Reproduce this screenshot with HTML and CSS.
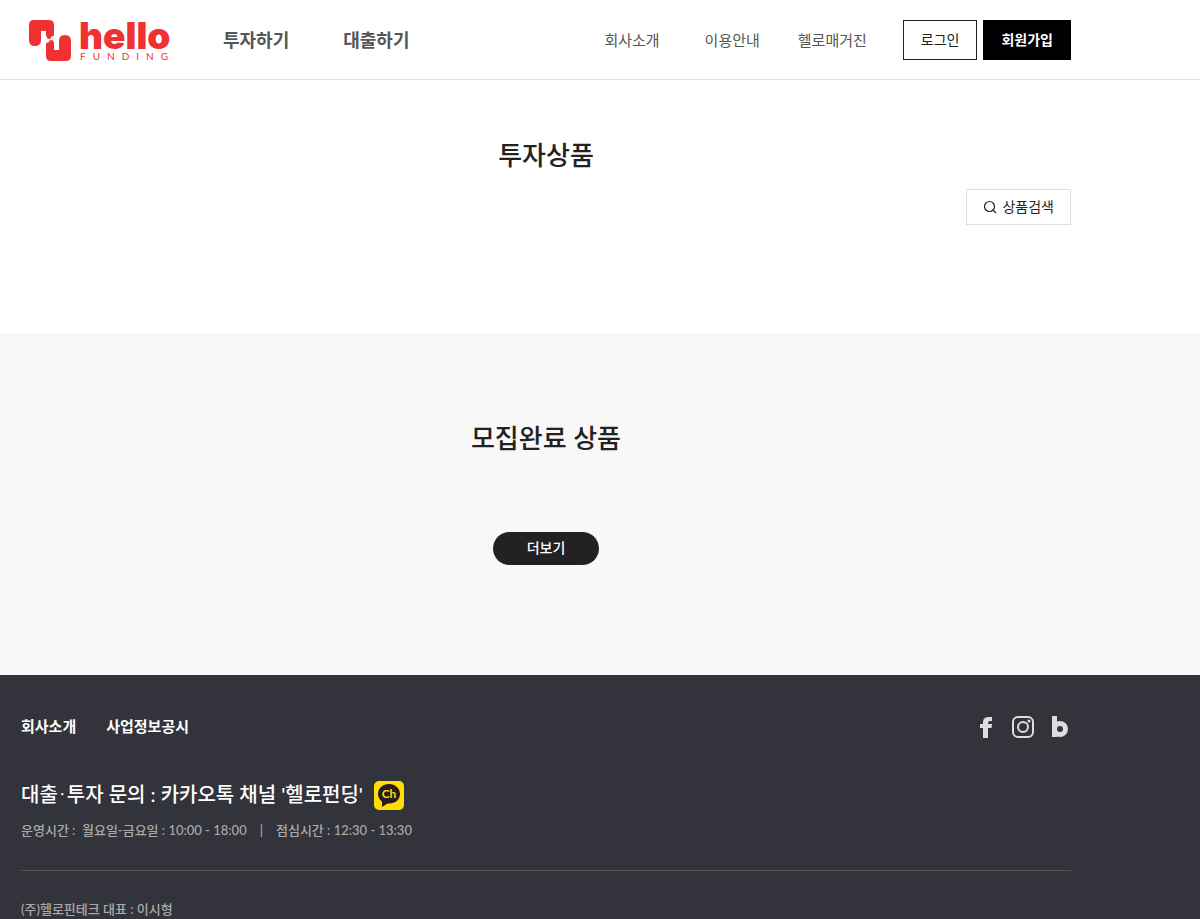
FILE: index.html
```html
<!DOCTYPE html>
<html lang="ko">
<head>
<meta charset="utf-8">
<meta name="viewport" content="width=device-width, initial-scale=1">
<title>헬로펀딩 - 투자상품</title>
<link rel="stylesheet" href="styles.css">
</head>
<body>
<header class="site-header">
  <div class="container header-inner">
    <a class="logo" href="#" aria-label="hello FUNDING">
      <svg width="150" height="42" viewBox="0 0 150 42" aria-hidden="true">
        <path class="logo-shape" d="M5 0H20Q25 0 25 5V15Q25 16 23.500 16Q22.500 16 22 17.500Q21.500 19 20 19Q18 19 18 17.500Q18 16 17 16V11H12V20Q12 26 6 26Q0 26 0 20V5Q0 0 5 0Z"/>
        <path class="logo-shape" d="M17 36V24Q17 22.500 18.500 22.500Q20 22.500 20.500 21Q21 20 22.500 20Q24.500 20 24.500 21.500Q24.500 22.500 25 22.500V30H30V21Q30 15 36 15Q42 15 42 21V36Q42 41 37 41H22Q17 41 17 36Z"/>
        <text class="logo-name" x="50" y="29">hello</text>
        <text class="logo-sub" x="51" y="40">FUNDING</text>
      </svg>
    </a>
    <nav class="main-nav">
      <a href="#">투자하기</a>
      <a href="#">대출하기</a>
    </nav>
    <nav class="sub-nav">
      <a href="#">회사소개</a>
      <a href="#">이용안내</a>
      <a href="#">헬로매거진</a>
    </nav>
    <div class="account">
      <button class="btn btn-login" type="button">로그인</button>
      <button class="btn btn-join" type="button">회원가입</button>
    </div>
  </div>
</header>
<main>
  <section class="products">
    <div class="container">
      <h2 class="section-title">투자상품</h2>
      <div class="tools">
        <button class="btn-search" type="button">
          <svg width="14" height="14" viewBox="0 0 14 14" aria-hidden="true"><circle cx="6.500" cy="6.500" r="5"/><path d="M10 10L13 13"/></svg>
          <span>상품검색</span>
        </button>
      </div>
    </div>
  </section>
  <section class="completed">
    <div class="container">
      <h2 class="section-title">모집완료 상품</h2>
      <button class="btn-more" type="button">더보기</button>
    </div>
  </section>
</main>
<footer class="site-footer">
  <div class="container">
    <div class="footer-top">
      <nav class="footer-nav">
        <a href="#">회사소개</a>
        <a href="#">사업정보공시</a>
      </nav>
      <div class="social">
        <a href="#" aria-label="Facebook"><svg width="22" height="22" viewBox="0 0 22 22"><path class="fill" d="M8 22V12H5V8H8V6Q8 1 14 1H17V5H15Q13 5 13 7V8H17L16.500 12H13V22Z"/></svg></a>
        <a href="#" aria-label="Instagram"><svg width="22" height="22" viewBox="0 0 22 22"><rect class="line" x="1" y="1" width="20" height="20" rx="5"/><circle class="line" cx="11" cy="11" r="5"/><circle class="fill" cx="17" cy="5" r="1.500"/></svg></a>
        <a href="#" aria-label="Blog"><svg width="22" height="22" viewBox="0 0 22 22"><rect class="fill" x="3" y="0" width="5" height="21"/><circle class="ring" cx="11" cy="13" r="5.500"/></svg></a>
      </div>
    </div>
    <div class="contact">
      <p class="contact-title">대출<span class="dot">·</span>투자 문의 : 카카오톡 채널 '헬로펀딩'</p>
      <a href="#" class="kakao" aria-label="카카오톡 채널">
        <svg width="30" height="29" viewBox="0 0 30 29"><rect class="kakao-bg" width="30" height="29" rx="5"/><path class="kakao-bubble" d="M15 3C8.500 3 4 7.500 4 13Q4 17.500 8 20.500V26L13.500 22.500H15C21.500 22.500 26 18.500 26 13S21.500 3 15 3Z"/><text class="kakao-text" x="15" y="17" text-anchor="middle">Ch</text></svg>
      </a>
    </div>
    <p class="hours"><span>운영시간&nbsp;: &nbsp;월요일-금요일 : 10:00 - 18:00</span><span class="bar">|</span><span>점심시간 : 12:30 - 13:30</span></p>
    <p class="company">(주)헬로핀테크 대표 : 이시형</p>
  </div>
</footer>
</body>
</html>
```
FILE: styles.css
```css
* { box-sizing: border-box; }
body {
  margin: 0;
  background: #fff;
  color: #222;
  font-family: Lato, "Noto Sans CJK KR", sans-serif;
  font-size: 15px;
  line-height: 20px;
}
a { color: inherit; text-decoration: none; }
button { font-family: inherit; cursor: pointer; }
h2, p { margin: 0; }
svg { display: block; overflow: visible; }
.container { width: 91%; padding: 0 21px; }

.site-header { border-bottom: 1px solid #ddd; }
.header-inner { display: flex; align-items: center; height: 79px; }
.logo { margin: 2px 0 0 8px; }
.logo-shape { fill: #ef3131; }
.logo-name { fill: #ef3131; font-family: Inter, sans-serif; font-weight: 900; font-size: 37px; }
.logo-sub { fill: #ef3131; font-size: 10px; letter-spacing: 7px; }
.main-nav { display: flex; gap: 54px; margin-left: 44px; font-size: 18px; font-weight: 700; color: #555; }
.sub-nav { display: flex; gap: 45px; margin-left: auto; color: #555; }
.sub-nav a:last-child { margin-left: -7px; }
.account { display: flex; gap: 6px; margin-left: 36px; }
.btn { height: 40px; padding: 0 17px; border: 1px solid #222; font-size: 14px; line-height: 20px; }
.btn-login { background: #fff; color: #222; }
.btn-join { background: #000; border-color: #000; color: #fff; font-weight: 700; }

.section-title { font-size: 26px; line-height: 38px; font-weight: 500; text-align: center; }
.products { padding: 56px 0 108px; }
.tools { display: flex; justify-content: flex-end; margin-top: 15px; }
.btn-search {
  display: flex; align-items: center; gap: 5px;
  height: 36px; padding: 0 16px;
  border: 1px solid #ddd; background: #fff; color: #222;
  font-size: 14px;
}
.btn-search span { padding-bottom: 2px; }
.btn-search svg { fill: none; stroke: #222; stroke-width: 1.2; }
.completed { padding: 86px 0 110px; background: #f8f8f8; }
.btn-more {
  display: block; height: 33px; margin: 75px auto 0; padding: 0 34px 3px;
  border: 0; border-radius: 17px; background: #222; color: #fff;
  font-size: 14px; font-weight: 500;
}

.site-footer { padding-top: 41px; background: #33333b; color: #fff; }
.footer-top { display: flex; justify-content: space-between; align-items: flex-start; }
.footer-nav { display: flex; gap: 30px; font-weight: 700; }
.social { display: flex; gap: 15px; }
.social .fill { fill: #ddd; }
.social .line { fill: none; stroke: #ddd; stroke-width: 2; }
.social .ring { fill: none; stroke: #ddd; stroke-width: 5; }
.contact { display: flex; align-items: center; gap: 11px; margin-top: 42px; }
.contact-title { padding-bottom: 2px; font-size: 20px; line-height: 28px; font-weight: 500; }
.contact-title .dot { font-family: "Noto Sans CJK KR", sans-serif; font-weight: 300; margin: 0 2px; }
.kakao-bg { fill: #ffde00; }
.kakao-bubble { fill: #2a1a1b; }
.kakao-text { fill: #ffde00; font-size: 12px; font-weight: 700; }
.hours { padding-bottom: 30px; margin-top: 10px; border-bottom: 1px solid #555; color: #aaa; font-size: 13px; font-weight: 500; }
.hours .bar { margin: 0 13px; }
.company { margin-top: 29px; color: #aaa; font-size: 13px; font-weight: 500; line-height: 19px; }
```
